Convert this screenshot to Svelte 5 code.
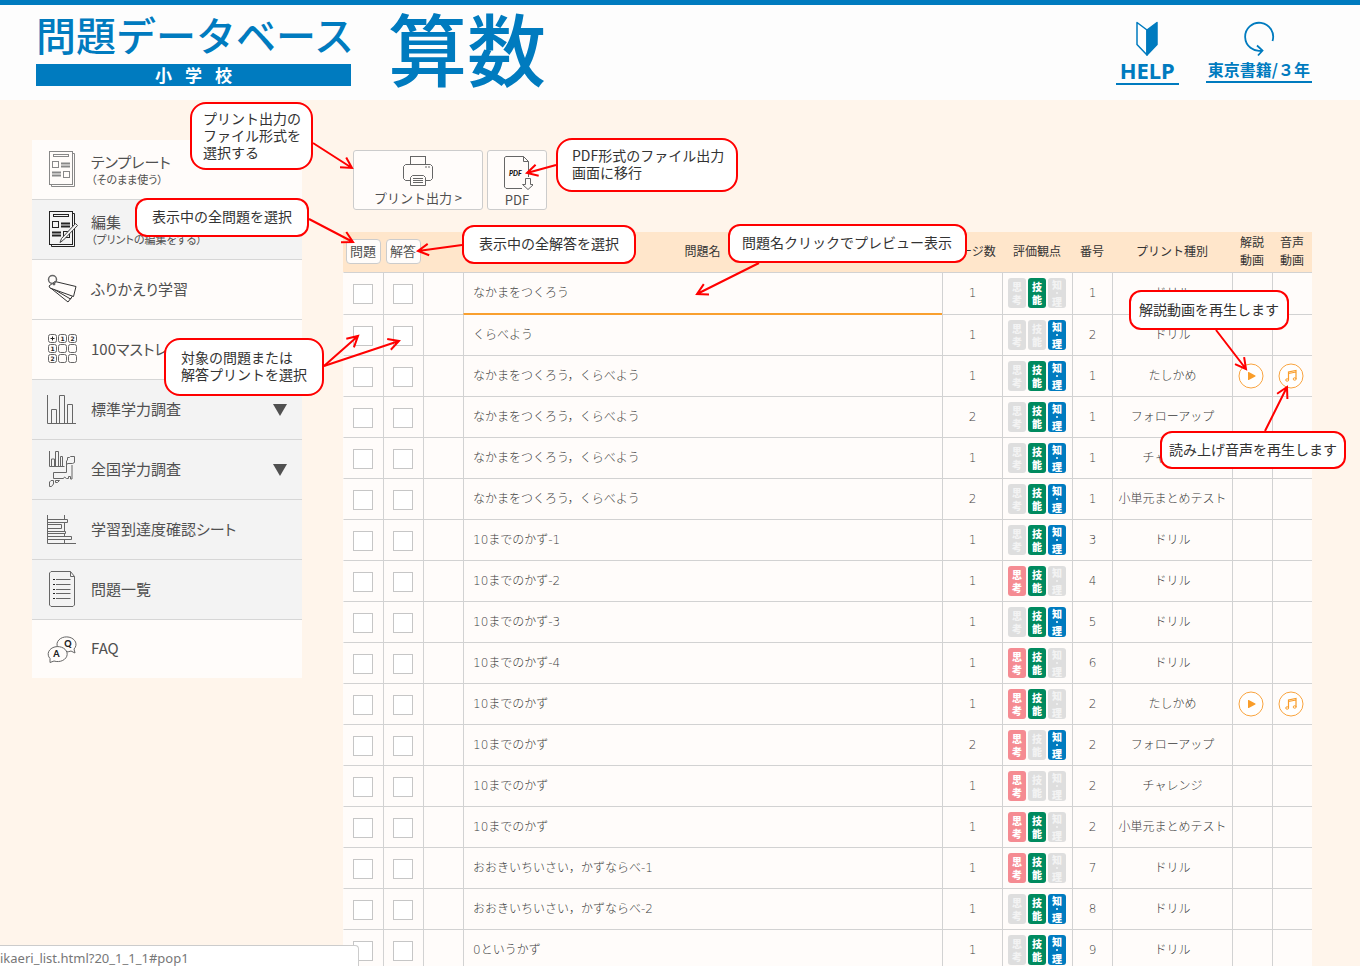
<script>
  const nav = [
    { icon: 'template', label: 'テンプレート', sub: '（そのまま使う）' },
    { icon: 'edit', label: '編集', sub: '（プリントの編集をする）', grey: true },
    { icon: 'cards', label: 'ふりかえり学習' },
    { icon: 'grid', label: '100マストレーニング' },
    { icon: 'chart', label: '標準学力調査', grey: true, more: true },
    { icon: 'japan', label: '全国学力調査', grey: true, more: true },
    { icon: 'sheet', label: '学習到達度確認シート', grey: true },
    { icon: 'list', label: '問題一覧', grey: true },
    { icon: 'faq', label: 'FAQ' },
  ];

  // name, pages, viewpoints (think / skill / know), number, print type, has media
  const rows = [
    ['なかまをつくろう', 1, '010', 1, 'ドリル'],
    ['くらべよう', 1, '001', 2, 'ドリル'],
    ['なかまをつくろう，くらべよう', 1, '011', 1, 'たしかめ', true],
    ['なかまをつくろう，くらべよう', 2, '011', 1, 'フォローアップ'],
    ['なかまをつくろう，くらべよう', 1, '011', 1, 'チャレンジ'],
    ['なかまをつくろう，くらべよう', 2, '011', 1, '小単元まとめテスト'],
    ['10までのかず-1', 1, '011', 3, 'ドリル'],
    ['10までのかず-2', 1, '110', 4, 'ドリル'],
    ['10までのかず-3', 1, '011', 5, 'ドリル'],
    ['10までのかず-4', 1, '110', 6, 'ドリル'],
    ['10までのかず', 1, '110', 2, 'たしかめ', true],
    ['10までのかず', 2, '101', 2, 'フォローアップ'],
    ['10までのかず', 1, '100', 2, 'チャレンジ'],
    ['10までのかず', 1, '110', 2, '小単元まとめテスト'],
    ['おおきいちいさい，かずならべ-1', 1, '110', 7, 'ドリル'],
    ['おおきいちいさい，かずならべ-2', 1, '011', 8, 'ドリル'],
    ['0というかず', 1, '011', 9, 'ドリル'],
  ];

  const badges = [
    { cls: 'think', a: '思', b: '考' },
    { cls: 'skill', a: '技', b: '能' },
    { cls: 'know', a: '知', b: '理', dot: true },
  ];

  // annotation bubbles and the arrows that leave them
  const notes = [
    { x: 190, y: 102, w: 123, h: 68, pad: 11, lines: ['プリント出力の', 'ファイル形式を', '選択する'] },
    { x: 135, y: 198, w: 174, h: 39, pad: 15, lines: ['表示中の全問題を選択'] },
    { x: 556, y: 138, w: 182, h: 54, pad: 14, lines: ['PDF形式のファイル出力', '画面に移行'] },
    { x: 462, y: 225, w: 174, h: 39, pad: 15, lines: ['表示中の全解答を選択'] },
    { x: 728, y: 224, w: 239, h: 39, pad: 12, lines: ['問題名クリックでプレビュー表示'] },
    { x: 1129, y: 290, w: 160, h: 40, pad: 8, lines: ['解説動画を再生します'] },
    { x: 1160, y: 431, w: 186, h: 38, pad: 7, lines: ['読み上げ音声を再生します'] },
    { x: 164, y: 338, w: 160, h: 58, pad: 15, lines: ['対象の問題または', '解答プリントを選択'] },
  ];
  const arrows = [
    [313, 143, 352, 168],
    [309, 219, 353, 242],
    [556, 165, 527, 173],
    [462, 245, 418, 251],
    [759, 263, 697, 294],
    [1216, 330, 1246, 369],
    [1265, 431, 1287, 387],
    [324, 366, 358, 336],
    [324, 366, 399, 341],
  ];
  function arrowPath([x1, y1, x2, y2]) {
    const t = Math.atan2(y2 - y1, x2 - x1);
    const p = (d) => `${(x2 - 12 * Math.cos(t + d)).toFixed(1)} ${(y2 - 12 * Math.sin(t + d)).toFixed(1)}`;
    return `M${x1} ${y1}L${x2} ${y2}M${p(0.5)}L${x2} ${y2}L${p(-0.5)}`;
  }
</script>

<div class="page" lang="ja">
  <header>
    <div class="logo">
      <div class="title">問題データベース</div>
      <div class="school"><span>小</span><span>学</span><span>校</span></div>
    </div>
    <h1>算数</h1>
    <nav class="tools">
      <a class="help" href="#help">
        <svg width="24" height="36" viewBox="0 0 24 36"><path d="M2 1.5 12 9V34L2 23.500Z" fill="#fff" stroke="#007bbf" stroke-width="1.500" stroke-linejoin="round" /><path d="M12 9 22 1.500V23.500L12 34Z" fill="#007bbf" stroke="#007bbf" stroke-width="1.500" stroke-linejoin="round" /></svg>
        <span>HELP</span>
      </a>
      <a class="book" href="#book">
        <svg width="32" height="36" viewBox="0 0 32 36"><path d="M29.500 20A14 14 0 1 0 19 29.500M14 24.500l5.500 5-4.500 5" fill="none" stroke="#007bbf" stroke-width="1.800" /></svg>
        <span>東京書籍/３年</span>
      </a>
    </nav>
  </header>

  <div class="body">
    <nav class="side">
      {#each nav as n}
        <a href={'#' + n.icon} class:grey={n.grey}>
          <svg class="icon" width="32" height="59" viewBox="0 0 32 59" fill="none" stroke="#666" stroke-width="1">
            {#if n.icon === 'template' || n.icon === 'edit'}
              <g stroke={n.icon === 'edit' ? '#222' : '#888'}>
                <path d="M26.500 13.500h2v33h-23v-2" />
                <rect x="3.500" y="11.500" width="23" height="33" />
                <rect x="7.500" y="14.500" width="15" height="2" />
                <rect x="6.500" y="21.500" width="6" height="6" />
                <path d="M15 23.500h9M15 26.500h9M6 32.500h9M6 35.500h9" stroke-width="2" />
                <rect x="17.500" y="31.500" width="6" height="6" />
              </g>
              {#if n.icon === 'edit'}
                <path d="M29.500 23.500l2 2L17.500 40l-3.500 2.500 1.500-4Z" fill="#f3f3f3" stroke="#444" />
              {/if}
            {:else if n.icon === 'cards'}
              <path d="M4 27.500 22 42l3-4M4 27l20.500 12 2-3" stroke="#333" />
              <path d="M9 21.500 30 26.500 27.500 36.500 4 28 3 26Z" fill="#fffcfa" stroke="#333" />
              <circle cx="6.500" cy="19.500" r="4" stroke-width="1.500" />
              <circle cx="8" cy="24" r="1" fill="#333" />
            {:else if n.icon === 'grid'}
              {#each [0, 1, 2] as r}
                {#each [0, 1, 2] as c}
                  <rect x={2.5 + c * 10} y={14.5 + r * 10} width="8" height="8" rx="2" />
                {/each}
              {/each}
              <path d="M4.500 18.500h4M6.500 16.500v4" stroke="#222" stroke-width="1" />
              <g class="digit">
                <text x="16.500" y="21">1</text><text x="26.500" y="21">2</text>
                <text x="6.500" y="31">1</text><text x="6.500" y="41">2</text>
              </g>
            {:else if n.icon === 'chart'}
              <path d="M1.500 15v28.500H30M5.500 43V29.500h5V43M13.500 43V15.500h5V43M21.500 43V24.500h5V43" />
            {:else if n.icon === 'japan'}
              <path d="M3.500 11v15.500h15M5.500 26v-7h3v7M9.500 26V11.500h3V26M14.500 26v-9.500h2V26" />
              <path d="M21.500 17.500h2l1-1h4v6l-2 1h-5l-1 1.500v-4l1-1ZM20.500 24v8.500h-13v6h10l1-1.500 2 1.500h2v-2h2v2.500h1.500V25M3.500 42l1.500-1.500h2.500v3.500l-2 2.500h-2ZM9.500 40.500h4l-2 2h-2Z" />
            {:else if n.icon === 'sheet'}
              <path d="M1.500 15v28.500H30M18.500 15v4M18.500 22v9M18.500 34v2M18.500 39v4M2 19.500h19.500v3H2M2 24.500h13.500v4H2M2 31.500h17.500v2H2M2 36.500h23.500v3H2" />
            {:else if n.icon === 'list'}
              <path d="M5 11.500h19.500l4 5V45l-1.500 1.500H5L3.500 45V13ZM24.500 11.500v5h4M10 19.500h14.500M10 24.500h14.500M10 29.500h14.500M10 33.500h14.500M10 38.500h14.500" />
              <path d="M7 19.500h2M7 24.500h2M7 29.500h2M7 33.500h2M7 38.500h2" stroke="#222" />
            {:else}
              <path d="M28 29l1 4-4-2a9.500 7.500 0 1 1 3-2Z" fill="#fffcfa" />
              <path d="M4 38.500v4l4-1.500a9.500 7.500 0 1 0-4-2.500Z" fill="#fffcfa" />
              <g class="qa"><text x="22" y="26.500">Q</text><text x="10.500" y="37">A</text></g>
            {/if}
          </svg>
          <span class="label">{n.label}{#if n.sub}<small>{n.sub}</small>{/if}</span>
          {#if n.more}
            <svg class="more" width="14" height="12" viewBox="0 0 14 12"><path d="M0 0h14L7 12Z" fill="#505050" /></svg>
          {/if}
        </a>
      {/each}
    </nav>

    <main>
      <div class="actions">
        <button class="print">
          <svg width="32" height="32" viewBox="0 0 32 32" fill="#fffcfa" stroke="#666">
            <rect x="8.500" y="1.500" width="15" height="8" />
            <path d="M8.500 25.500h-5l-2-2v-12l2-2h25l2 2v12l-2 2h-5" />
            <path d="M10.500 20.500h11l2 2v8h-15v-8ZM11 23.500h10M11 25.500h10M11 27.500h10" />
            <path d="M23 12h2M26 12h2" />
          </svg>
          プリント出力 &gt;
        </button>
        <button class="pdf">
          <svg width="32" height="36" viewBox="0 0 32 36" fill="none" stroke="#666">
            <path d="M21 33.500H5L3.500 32V2.500L5 1.500h17.500l5 5V22M22.500 1.500v5h5" />
            <path d="M24.500 23.500h5v6h3l-5.500 5-5.500-5h3Z" />
            <text x="8" y="21">PDF</text>
          </svg>
          PDF
        </button>
      </div>

      <table>
        <colgroup>
          <col class="c40" /><col class="c40" /><col class="c40" /><col /><col class="c60" /><col class="c70" /><col class="c40" /><col class="c120" /><col class="c40" /><col class="c40" />
        </colgroup>
        <thead>
          <tr>
            <th><button class="all">問題</button></th>
            <th><button class="all">解答</button></th>
            <th></th>
            <th>問題名</th>
            <th>ページ数</th>
            <th>評価観点</th>
            <th>番号</th>
            <th>プリント種別</th>
            <th>解説<br />動画</th>
            <th>音声<br />動画</th>
          </tr>
        </thead>
        <tbody>
          {#each rows as [name, pages, view, num, type, media], i}
            <tr>
              <td class="tick"><input type="checkbox" aria-label={`問題 ${i + 1}`} /></td>
              <td class="tick"><input type="checkbox" aria-label={`解答 ${i + 1}`} /></td>
              <td></td>
              <td class="name"><a href={`#pop${i + 1}`}>{name}</a></td>
              <td>{pages}</td>
              <td class="views">
                <div>
                  {#each badges as b, k}
                    <span class={'badge ' + (view[k] === '1' ? b.cls : 'off')}>
                      <b>{b.a}</b>{#if b.dot}<i></i>{/if}<b>{b.b}</b>
                    </span>
                  {/each}
                </div>
              </td>
              <td>{num}</td>
              <td>{type}</td>
              <td class="media">
                {#if media}
                  <button aria-label="解説動画">
                    <svg width="26" height="26" viewBox="0 0 26 26"><circle cx="13" cy="13" r="12" fill="#fff" stroke="#f9a43f" /><path d="M10 9.500q0-.8.8-.4l6.500 3.400q.7.500 0 1l-6.500 3.400q-.8.400-.8-.4Z" fill="#f99d2a" /></svg>
                  </button>
                {/if}
              </td>
              <td class="media">
                {#if media}
                  <button aria-label="音声">
                    <svg width="26" height="26" viewBox="0 0 26 26"><circle cx="13" cy="13" r="12" fill="#fff" stroke="#f9a43f" /><path d="M10.500 17V9l7.500-1.500v8.500M10.500 10.500 18 9" fill="none" stroke="#f99d2a" stroke-width="1.200" /><ellipse cx="9.200" cy="17" rx="1.500" ry="1.200" fill="none" stroke="#f99d2a" /><ellipse cx="16.700" cy="16" rx="1.500" ry="1.200" fill="none" stroke="#f99d2a" /></svg>
                  </button>
                {/if}
              </td>
            </tr>
          {/each}
        </tbody>
      </table>
    </main>
  </div>

  {#each notes as n}
    <div class="note" class:tall={n.lines.length > 1} style="left:{n.x}px;top:{n.y}px;width:{n.w}px;height:{n.h}px;padding-left:{n.pad}px">
      {#each n.lines as l}<div>{l}</div>{/each}
    </div>
  {/each}
  <svg class="arrows" fill="none" stroke="#f00" stroke-width="2">
    {#each arrows as a}<path d={arrowPath(a)} />{/each}
  </svg>

  <div class="status">ikaeri_list.html?20_1_1_1#pop1</div>
</div>

<style>
  :global(body) { margin: 0; background: #fff5eb; }
  .page {
    position: relative;
    height: 100vh;
    overflow: hidden;
    background: #fff5eb;
    color: #333;
    font: 12px/18px "Noto Sans CJK JP", sans-serif;
  }
  a { color: inherit; text-decoration: none; }
  button { font: inherit; color: inherit; padding: 0; margin: 0; cursor: pointer; }
  svg { display: block; flex: none; }

  header {
    display: flex;
    box-sizing: border-box;
    height: 100px;
    padding: 0 48px 0 36px;
    border-top: 5px solid #007bbf;
    background: #fdfdfd;
    color: #007bbf;
  }
  .logo { width: 315px; margin-right: 37px; }
  .title { font-size: 40px; line-height: 58px; height: 59px; white-space: nowrap; font-weight: 500; }
  .school {
    display: flex;
    justify-content: center;
    gap: 13px;
    background: #007bbf;
    color: #fff;
    font-size: 17px;
    line-height: 22px;
    font-weight: 700;
  }
  h1 { margin: 0; font-size: 79px; line-height: 84px; font-weight: 500; }
  .tools { display: flex; gap: 27px; margin-left: auto; font-weight: 700; white-space: nowrap; }
  .tools a { display: flex; flex-direction: column; align-items: center; padding-top: 16px; }
  .tools span { border-bottom: 2px solid #007bbf; }
  .help span { font: 700 22px/26px "Noto Sans", sans-serif; padding: 0 4px; }
  .book span { font-size: 16px; line-height: 24px; padding: 0 2px; }

  .body { display: flex; align-items: flex-start; gap: 41px; padding: 0 48px 0 32px; }
  .side { width: 270px; flex: none; margin-top: 40px; }
  .side a {
    display: flex;
    align-items: center;
    height: 59px;
    padding: 0 15px 0 14px;
    border-bottom: 1px solid #d6d6d6;
    background: #fffcfa;
    color: #505050;
    font-size: 15px;
    line-height: 20px;
    font-feature-settings: "palt";
    white-space: nowrap;
  }
  .side a.grey { background: #f3f3f3; }
  .side a:last-child { border-bottom: 0; height: 58px; }
  .label { flex: 1; margin-left: 13px; padding-bottom: 2px; }
  small { display: block; font-size: 11px; line-height: 14px; }
  .digit text, .qa text { fill: #222; stroke: none; font: 700 6px "DejaVu Sans", sans-serif; text-anchor: middle; }
  .qa text { font: 900 9px Lato, sans-serif; }

  main { flex: 1; min-width: 0; padding-top: 50px; }
  .actions { display: flex; gap: 4px; padding-left: 10px; margin-bottom: 22px; }
  .actions button {
    display: flex;
    flex-direction: column;
    align-items: center;
    box-sizing: border-box;
    height: 60px;
    border: 1px solid #ccc;
    border-radius: 3px;
    background: #fffcfa;
    color: #505050;
    font-size: 13px;
    line-height: 20px;
  }
  .print { width: 130px; padding-top: 4px; }
  .print svg { margin-bottom: 1px; }
  .pdf { width: 60px; padding-top: 4px; }
  .pdf text { font: italic 900 7px Lato, sans-serif; fill: #111; stroke: none; }
  .actions .pdf { line-height: 18px; }

  table { width: 100%; table-layout: fixed; border-collapse: separate; border-spacing: 0; background: #fffcfa; }
  .c40 { width: 40px; }
  .c60 { width: 60px; }
  .c70 { width: 70px; }
  .c120 { width: 120px; }
  th { height: 38px; padding: 0 0 2px; background: #ffe6cb; font-weight: 400; white-space: nowrap; }
  .all {
    width: 35px;
    height: 25px;
    border: 1px solid #ccc;
    border-radius: 4px;
    background: #fffcfa;
    color: #505050;
    font-size: 13px;
    line-height: 22px;
  }
  td {
    box-sizing: border-box;
    height: 41px;
    padding: 0;
    border: solid #d2d2d2;
    border-width: 1px 0 0 1px;
    vertical-align: top;
    text-align: center;
    color: #3c3c3c;
    font-family: "DejaVu Sans", "Noto Sans CJK JP", sans-serif;
    font-weight: 300;
    line-height: 40px;
    white-space: nowrap;
  }
  td:first-child { border-left-color: #fffcfa; }
  tbody tr:first-child td { height: 42px; }
  td.name { padding-left: 9px; text-align: left; }
  tbody tr:first-child .name { border-bottom: 1px solid #f9a02f; }
  tbody tr:nth-child(2) .name { border-top-color: #f9a02f; }
  .tick input {
    appearance: none;
    display: block;
    box-sizing: border-box;
    width: 20px;
    height: 20px;
    margin: 11px 0 0 9px;
    border: 1px solid #c6c6c6;
    background: #fff;
  }
  .views div { display: flex; gap: 2px; padding: 5px 0 0 5px; }
  .badge {
    display: flex;
    flex-direction: column;
    align-items: center;
    justify-content: center;
    width: 18px;
    height: 30px;
    border-radius: 3px;
    color: #fff;
    font: 700 10px/13px "Noto Sans CJK JP", sans-serif;
  }
  .badge b { display: block; }
  .badge i { width: 2px; height: 2px; border-radius: 1px; background: currentColor; margin: 1px 0; }
  .off { background: #dedede; color: #f3f3f3; }
  .think { background: #f58b92; }
  .skill { background: #008a5e; }
  .know { background: #007bbf; }
  .media button { display: block; margin: 7px 0 0 5px; border: 0; background: none; }

  .note {
    position: absolute;
    display: flex;
    flex-direction: column;
    justify-content: center;
    box-sizing: border-box;
    padding-bottom: 2px;
    border: 2px solid #f00;
    border-radius: 12px;
    background: #fff;
    font-size: 14px;
    line-height: 17px;
    white-space: nowrap;
  }
  .note.tall { border-radius: 16px; }
  .arrows { position: absolute; left: 0; top: 0; width: 100%; height: 100%; pointer-events: none; }

  .status {
    position: absolute;
    left: 0;
    bottom: 0;
    box-sizing: border-box;
    width: 359px;
    height: 21px;
    border: solid #ccc;
    border-width: 1px 1px 0 0;
    border-radius: 0 4px 0 0;
    background: #fff;
    color: #777;
    font: 13px/24px "Noto Sans", sans-serif;
  }
</style>
